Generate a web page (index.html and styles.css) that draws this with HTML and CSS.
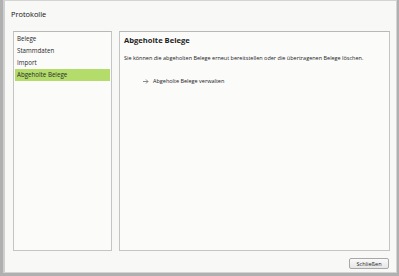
FILE: index.html
```html
<!DOCTYPE html>
<html lang="de">

<head>
  <meta charset="UTF-8">
  <title>Protokolle</title>
  <link rel="stylesheet" href="styles.css">
</head>

<body>
  <div id="window">
    <div id="title">Protokolle</div>
    <div id="content">
      <div id="list">
        <div class="item">Belege</div>
        <div class="item">Stammdaten</div>
        <div class="item">Import</div>
        <div class="item selected">Abgeholte Belege</div>
      </div>
      <div id="panel">
        <h3>Abgeholte Belege</h3>
        <p>Sie können die abgeholten Belege erneut bereitstellen oder die übertragenen Belege löschen.</p>
        <div class="link">
          <svg class="arrow" width="6" height="5" viewBox="0 0 6 5"><path d="M0 2.5H5M3 0.5L5 2.5L3 4.5" fill="none" stroke="#8a8a8a" stroke-width="1"/></svg>
          Abgeholte Belege verwalten
        </div>
      </div>
    </div>
    <div id="footer">
      <button>Schließen</button>
    </div>
  </div>
</body>

</html>
```

FILE: styles.css
```css
* {
  box-sizing: border-box;
}

body {
  margin: 0;
  height: 276px;
  background: #b0b0b0;
  font-family: "Open Sans", sans-serif;
  color: #222;
}

#window {
  display: flex;
  flex-direction: column;
  margin-left: 3px;
  width: 394px;
  height: 273px;
  padding: 0 6px 3px 8px;
  background: #f8f8f6;
  border: 1px solid #d4d4d4;
  border-left: 2px solid #cfcfcf;
}

#title {
  height: 30px;
  margin-left: -2px;
  padding-top: 8px;
  font-size: 7.4px;
  color: #111;
}

#content {
  display: grid;
  grid-template-columns: 99px 1fr;
  gap: 7px;
  height: 220px;
}

#list,
#panel {
  background: #fbfbfa;
  border: 1px solid #c4c4c4;
  border-top-color: #b8b8b8;
}

#list {
  padding: 1px;
}

.item {
  height: 12px;
  line-height: 12px;
  padding-left: 2px;
  font-size: 6.2px;
  color: #2a2a2a;
}

.selected {
  background: #b3dc6b;
}

#panel {
  padding: 3px 4px;
}

#panel h3 {
  margin: 0;
  font-size: 7.6px;
  font-weight: bold;
  color: #1e1e1e;
}

#panel p {
  margin: 9px 0 0;
  font-size: 5.5px;
}

.link {
  display: flex;
  align-items: center;
  gap: 4px;
  margin: 15px 0 0 19px;
  font-size: 5.5px;
}

#footer {
  flex: 1;
  display: flex;
  justify-content: flex-end;
  align-items: flex-end;
}

#footer button {
  width: 40px;
  height: 11px;
  margin-right: 1px;
  padding: 0;
  font-family: "Open Sans", sans-serif;
  font-size: 5.6px;
  color: #222;
  background: linear-gradient(#fafafa, #e6e6e6);
  border: 1px solid #a8a8a8;
  border-radius: 2px;
}
```
